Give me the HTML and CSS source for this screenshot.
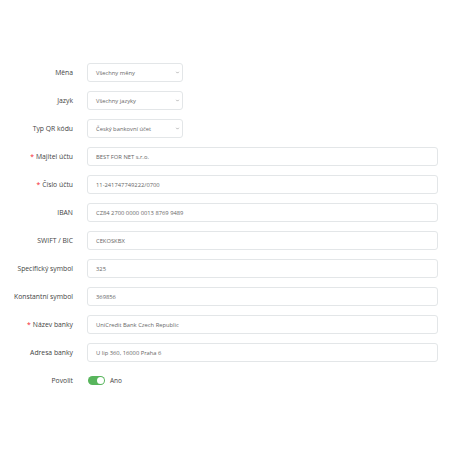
FILE: index.html
```html
<!DOCTYPE html>
<html lang="cs">
<head>
  <meta charset="UTF-8" />
  <meta name="viewport" content="width=device-width, initial-scale=1" />
  <title>QR platba</title>
  <link rel="stylesheet" href="styles.css">
</head>
<body>
  <form class="form">
    <div class="row">
      <label class="label">Měna</label>
      <div class="select"><span>Všechny měny</span><svg viewBox="0 0 8 8" class="chev"><path d="M2.5 3.2l1.5 1.5 1.5-1.5" /></svg></div>
    </div>
    <div class="row">
      <label class="label">Jazyk</label>
      <div class="select"><span>Všechny jazyky</span><svg viewBox="0 0 8 8" class="chev"><path d="M2.5 3.2l1.5 1.5 1.5-1.5" /></svg></div>
    </div>
    <div class="row">
      <label class="label">Typ QR kódu</label>
      <div class="select"><span>Český bankovní účet</span><svg viewBox="0 0 8 8" class="chev"><path d="M2.5 3.2l1.5 1.5 1.5-1.5" /></svg></div>
    </div>
    <div class="row">
      <label class="label req">Majitel účtu</label>
      <div class="input">BEST FOR NET s.r.o.</div>
    </div>
    <div class="row">
      <label class="label req">Číslo účtu</label>
      <div class="input">11-241747749222/0700</div>
    </div>
    <div class="row">
      <label class="label">IBAN</label>
      <div class="input">CZ84 2700 0000 0013 8769 9489</div>
    </div>
    <div class="row">
      <label class="label">SWIFT / BIC</label>
      <div class="input">CEKOSKBX</div>
    </div>
    <div class="row">
      <label class="label">Specifický symbol</label>
      <div class="input">325</div>
    </div>
    <div class="row">
      <label class="label">Konstantní symbol</label>
      <div class="input">369856</div>
    </div>
    <div class="row">
      <label class="label req">Název banky</label>
      <div class="input">UniCredit Bank Czech Republic</div>
    </div>
    <div class="row">
      <label class="label">Adresa banky</label>
      <div class="input">U lip 360, 16000 Praha 6</div>
    </div>
    <div class="row">
      <label class="label">Povolit</label>
      <div class="switch-wrap"><span class="switch"><span class="knob"></span></span><span class="switch-text">Ano</span></div>
    </div>
  </form>
</body>
</html>
```

FILE: styles.css
```css
body {
  margin: 0;
  background: #fff;
  font-family: "Open Sans", "Liberation Sans", sans-serif;
  color: #333;
}

.form {
  display: flex;
  flex-direction: column;
  gap: 9px;
  padding: 63px 12px 0 0;
}

.row {
  display: grid;
  grid-template-columns: 73px 1fr;
  column-gap: 14px;
  align-items: center;
  height: 19px;
}

.label {
  text-align: right;
  font-size: 6.8px;
  color: #444;
  white-space: nowrap;
}

.req::before {
  content: "*";
  color: #f5222d;
  margin-right: 2px;
}

.select, .input {
  box-sizing: border-box;
  height: 19px;
  border: 1px solid #e3e6e8;
  border-radius: 3px;
  font-size: 5.8px;
  color: #666;
  display: flex;
  align-items: center;
  padding: 0 8px;
  white-space: nowrap;
}

.select {
  width: 96px;
  justify-content: space-between;
  padding-right: 1px;
}

.chev {
  width: 7px;
  height: 7px;
  fill: none;
  stroke: #888;
  stroke-width: 0.7;
}

.switch-wrap {
  display: flex;
  align-items: center;
  gap: 5px;
  padding-left: 1px;
}

.switch {
  width: 17px;
  height: 9px;
  border-radius: 5px;
  background: #58b55c;
  display: flex;
  justify-content: flex-end;
  align-items: center;
  padding: 1px;
  box-sizing: border-box;
}

.knob {
  width: 7px;
  height: 7px;
  border-radius: 50%;
  background: #fff;
}

.switch-text {
  font-size: 6.5px;
  color: #444;
}
```
